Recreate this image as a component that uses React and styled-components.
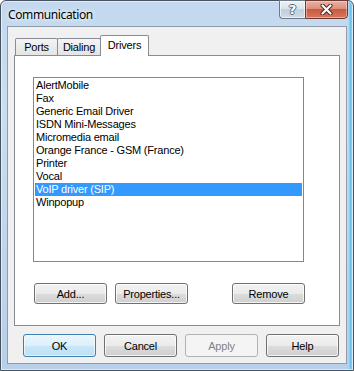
import React from 'react';
import styled, { createGlobalStyle } from 'styled-components';

const Global = createGlobalStyle`
  html, body { margin: 0; padding: 0; background: #ffffff; overflow: hidden; }
  #root { width: 354px; height: 371px; }
`;

const Window = styled.div`
  box-sizing: border-box;
  width: 354px;
  height: 371px;
  border: 1px solid #46525f;
  border-radius: 6px 6px 0 0;
  background:
    linear-gradient(to right, transparent 347px, #9fd4f2 348px, #5bbcec 350px, #a9d7f1 351px),
    linear-gradient(to bottom, #c3d8ee 0%, #cadef2 30%, #bfd5ec 70%, #b7cfe8 100%);
  box-shadow: inset 0 0 0 1px rgba(255, 255, 255, 0.55);
  padding: 0 6px 6px;
  display: flex;
  flex-direction: column;
  font-family: "Liberation Sans", Arial, sans-serif;
`;

const TitleBar = styled.div`
  height: 25px;
  display: flex;
  align-items: center;
  justify-content: space-between;
  margin-right: -1px;
`;

const Title = styled.div`
  margin-left: 1px;
  margin-top: 1px;
  font-family: "Noto Sans", "Liberation Sans", sans-serif;
  font-size: 12px;
  letter-spacing: -0.38px;
  color: #000;
  text-shadow: 0 0 6px rgba(255, 255, 255, 0.9), 0 0 3px rgba(255, 255, 255, 0.9);
`;

const Caption = styled.div`
  display: flex;
  align-self: flex-start;
  margin-top: -1px;
`;

const HelpButton = styled.div`
  box-sizing: border-box;
  width: 26px;
  height: 19px;
  border: 1px solid #6d7a88;
  border-right: none;
  border-radius: 0 0 0 4px;
  background: linear-gradient(to bottom, #eef2f7 0%, #dbe3ec 45%, #c3cfdb 50%, #cfdae5 100%);
  box-shadow: inset 0 0 0 1px rgba(255, 255, 255, 0.6);
  display: flex;
  align-items: center;
  justify-content: center;
  font-family: "DejaVu Sans", sans-serif;
  font-weight: bold;
  font-size: 13px;
  color: #ffffff;
  text-shadow: 1px 0 0 #5a6572, -1px 0 0 #5a6572, 0 1px 0 #5a6572, 0 -1px 0 #5a6572;
`;

const CloseButton = styled.div`
  box-sizing: border-box;
  width: 43px;
  height: 19px;
  border: 1px solid #6a3a36;
  border-radius: 0 0 4px 0;
  background: linear-gradient(to bottom, #eab1a3 0%, #dd8f7c 45%, #c85a43 50%, #d8765c 100%);
  box-shadow: inset 0 0 0 1px rgba(255, 220, 210, 0.5);
  display: flex;
  align-items: center;
  justify-content: center;
`;

const Client = styled.div`
  flex: 1;
  box-sizing: border-box;
  background: #f0f0f0;
  border: 1px solid #8f9cab;
  padding: 8px 6px 6px;
  display: flex;
  flex-direction: column;
`;

const TabStrip = styled.div`
  display: flex;
  align-items: flex-end;
  height: 21px;
  margin-bottom: -1px;
  padding-left: 1px;
  position: relative;
  z-index: 1;
`;

const Tab = styled.div`
  box-sizing: border-box;
  width: ${(p) => p.$w}px;
  height: ${(p) => (p.$active ? 21 : 17)}px;
  margin-bottom: ${(p) => (p.$active ? 0 : 1)}px;
  margin-left: ${(p) => (p.$first ? 0 : -1)}px;
  border: 1px solid #898c95;
  border-bottom: none;
  border-radius: 2px 2px 0 0;
  background: ${(p) => (p.$active ? '#ffffff' : 'linear-gradient(to bottom, #f4f4f4, #e4e4e4)')};
  position: relative;
  z-index: ${(p) => (p.$active ? 2 : 1)};
  display: flex;
  align-items: center;
  justify-content: center;
  padding-bottom: ${(p) => (p.$active ? 3 : 0)}px;
  font-size: 11px;
  color: #000;
  letter-spacing: -0.2px;
`;

const Panel = styled.div`
  box-sizing: border-box;
  height: 271px;
  border: 1px solid #898c95;
  background: #ffffff;
  padding: 21px 0 0 18px;
  display: flex;
  flex-direction: column;
`;

const List = styled.div`
  box-sizing: border-box;
  width: 271px;
  height: 185px;
  border: 1px solid #828790;
  background: #ffffff;
  padding: 1px;
`;

const Item = styled.div`
  height: 13px;
  line-height: 13px;
  padding-left: 1px;
  font-size: 11px;
  letter-spacing: -0.2px;
  white-space: nowrap;
  color: ${(p) => (p.$selected ? '#ffffff' : '#000000')};
  background: ${(p) => (p.$selected ? '#3399ff' : 'transparent')};
`;

const PanelButtons = styled.div`
  display: flex;
  margin-top: 21px;
  padding-left: 1px;
`;

const Button = styled.button`
  box-sizing: border-box;
  width: 73px;
  height: 23px;
  padding: 0;
  margin: 0;
  border: 1px solid #707070;
  border-radius: 3px;
  background: linear-gradient(to bottom, #f2f2f2 0%, #ebebeb 50%, #dddddd 51%, #cfcfcf 100%);
  box-shadow: inset 0 0 0 1px rgba(255, 255, 255, 0.75);
  font-family: "Liberation Sans", Arial, sans-serif;
  font-size: 11px;
  letter-spacing: -0.2px;
  color: #000;
  margin-left: ${(p) => p.$ml || 0}px;
`;

const PanelButton = styled(Button)`
  height: 21px;
`;

const DefaultButton = styled(Button)`
  border-color: #3c7fb1;
  background: linear-gradient(to bottom, #eaf6fd 0%, #dcf0fb 50%, #c9e7f8 51%, #bde0f4 100%);
  box-shadow: inset 0 0 0 1px rgba(255, 255, 255, 0.6);
`;

const DisabledButton = styled(Button)`
  border-color: #adb2b5;
  background: #f4f4f4;
  box-shadow: none;
  color: #838383;
`;

const DialogButtons = styled.div`
  display: flex;
  gap: 8px;
  margin-top: 8px;
  padding-left: 9px;
`;

const items = [
  'AlertMobile',
  'Fax',
  'Generic Email Driver',
  'ISDN Mini-Messages',
  'Micromedia email',
  'Orange France - GSM (France)',
  'Printer',
  'Vocal',
  'VoIP driver (SIP)',
  'Winpopup',
];

export default function App() {
  return (
    <>
      <Global />
      <Window>
        <TitleBar>
          <Title>Communication</Title>
          <Caption>
            <HelpButton>?</HelpButton>
            <CloseButton>
              <svg width="13" height="11" viewBox="0 0 13 11">
                <path d="M2.5 1.5 L10.5 9.5 M10.5 1.5 L2.5 9.5" stroke="#4b2420" strokeWidth="4" strokeLinecap="round" fill="none" />
                <path d="M2.5 1.5 L10.5 9.5 M10.5 1.5 L2.5 9.5" stroke="#ffffff" strokeWidth="2.2" strokeLinecap="round" fill="none" />
              </svg>
            </CloseButton>
          </Caption>
        </TitleBar>
        <Client>
          <TabStrip>
            <Tab $w={43} $first>Ports</Tab>
            <Tab $w={44}>Dialing</Tab>
            <Tab $w={49} $active>Drivers</Tab>
          </TabStrip>
          <Panel>
            <List>
              {items.map((it) => (
                <Item key={it} $selected={it === 'VoIP driver (SIP)'}>{it}</Item>
              ))}
            </List>
            <PanelButtons>
              <PanelButton>Add...</PanelButton>
              <PanelButton $ml={8}>Properties...</PanelButton>
              <PanelButton $ml={44}>Remove</PanelButton>
            </PanelButtons>
          </Panel>
          <DialogButtons>
            <DefaultButton>OK</DefaultButton>
            <Button>Cancel</Button>
            <DisabledButton>Apply</DisabledButton>
            <Button>Help</Button>
          </DialogButtons>
        </Client>
      </Window>
    </>
  );
}
